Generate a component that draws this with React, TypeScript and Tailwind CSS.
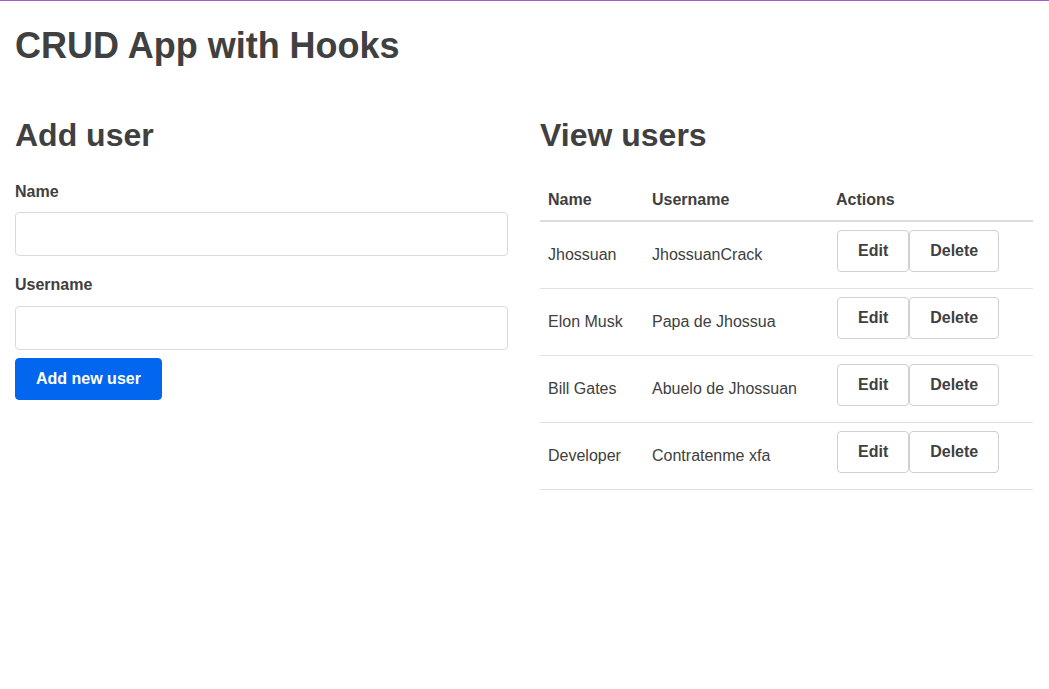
import { useState } from 'react';

interface User {
  id: number;
  name: string;
  username: string;
}

const initialUsers: User[] = [
  { id: 1, name: 'Jhossuan', username: 'JhossuanCrack' },
  { id: 2, name: 'Elon Musk', username: 'Papa de Jhossua' },
  { id: 3, name: 'Bill Gates', username: 'Abuelo de Jhossuan' },
  { id: 4, name: 'Developer', username: 'Contratenme xfa' },
];

function AddUserForm({ onAdd }: { onAdd: (u: Omit<User, 'id'>) => void }) {
  const [name, setName] = useState('');
  const [username, setUsername] = useState('');

  const handleSubmit = (e: React.FormEvent) => {
    e.preventDefault();
    if (!name.trim() || !username.trim()) return;
    onAdd({ name, username });
    setName('');
    setUsername('');
  };

  return (
    <form onSubmit={handleSubmit}>
      <label className="block h-[24px] leading-[24px] text-[16px] font-bold mb-[8px]">Name</label>
      <input
        type="text"
        value={name}
        onChange={(e) => setName(e.target.value)}
        className="block w-full h-[44px] px-[12px] border border-[#dadada] rounded-[4px] outline-none mb-[17px]"
      />
      <label className="block h-[24px] leading-[24px] text-[16px] font-bold mb-[9px]">Username</label>
      <input
        type="text"
        value={username}
        onChange={(e) => setUsername(e.target.value)}
        className="block w-full h-[44px] px-[12px] border border-[#dadada] rounded-[4px] outline-none mb-[8px]"
      />
      <button
        type="submit"
        className="h-[42px] px-[20px] border border-[#0366ee] bg-[#0366ee] text-white text-[16px] font-bold rounded-[4px]"
      >
        Add new user
      </button>
    </form>
  );
}

export default function App() {
  const [users, setUsers] = useState<User[]>(initialUsers);

  const addUser = (u: Omit<User, 'id'>) => {
    setUsers([...users, { ...u, id: users.length + 1 }]);
  };

  const deleteUser = (id: number) => {
    setUsers(users.filter((u) => u.id !== id));
  };

  return (
    <div
      className="min-h-[689px] bg-white text-[#404040] border-t border-[#9b5fd0]"
      style={{ fontFamily: '"Liberation Sans", Arial, sans-serif' }}
    >
      <div className="pl-[15px] pr-[16px] pt-[23px]">
        <h1 className="text-[36px] leading-[44px] font-bold">CRUD App with Hooks</h1>

        <div className="grid grid-cols-2 gap-[32px] mt-[47px]">
          {/* Add user */}
          <div>
            <h2 className="text-[32px] leading-[40px] font-bold mb-[25px]">Add user</h2>
            <AddUserForm onAdd={addUser} />
          </div>

          {/* View users */}
          <div>
            <h2 className="text-[32px] leading-[40px] font-bold mb-[25px]">View users</h2>
            <table className="w-full border-collapse text-left text-[16px]">
              <thead>
                <tr className="border-b-2 border-[#dcdcdc]">
                  <th className="w-[104px] p-[8px] leading-[24px] font-bold">Name</th>
                  <th className="w-[184px] p-[8px] leading-[24px] font-bold">Username</th>
                  <th className="p-[8px] leading-[24px] font-bold">Actions</th>
                </tr>
              </thead>
              <tbody>
                {users.map((u) => (
                  <tr key={u.id} className="border-b border-[#e1e1e1]">
                    <td className="p-[8px] leading-[24px] align-middle">{u.name}</td>
                    <td className="p-[8px] leading-[24px] align-middle">{u.username}</td>
                    <td className="p-[8px] align-middle">
                      <div className="flex ml-[1px] mb-[8px]">
                        <button className="h-[42px] px-[20px] border border-[#d0d0d0] rounded-[4px] bg-white text-[16px] font-bold text-[#404040]">
                          Edit
                        </button>
                        <button
                          onClick={() => deleteUser(u.id)}
                          className="h-[42px] px-[20px] border border-[#d0d0d0] rounded-[4px] bg-white text-[16px] font-bold text-[#404040]"
                        >
                          Delete
                        </button>
                      </div>
                    </td>
                  </tr>
                ))}
              </tbody>
            </table>
          </div>
        </div>
      </div>
    </div>
  );
}
